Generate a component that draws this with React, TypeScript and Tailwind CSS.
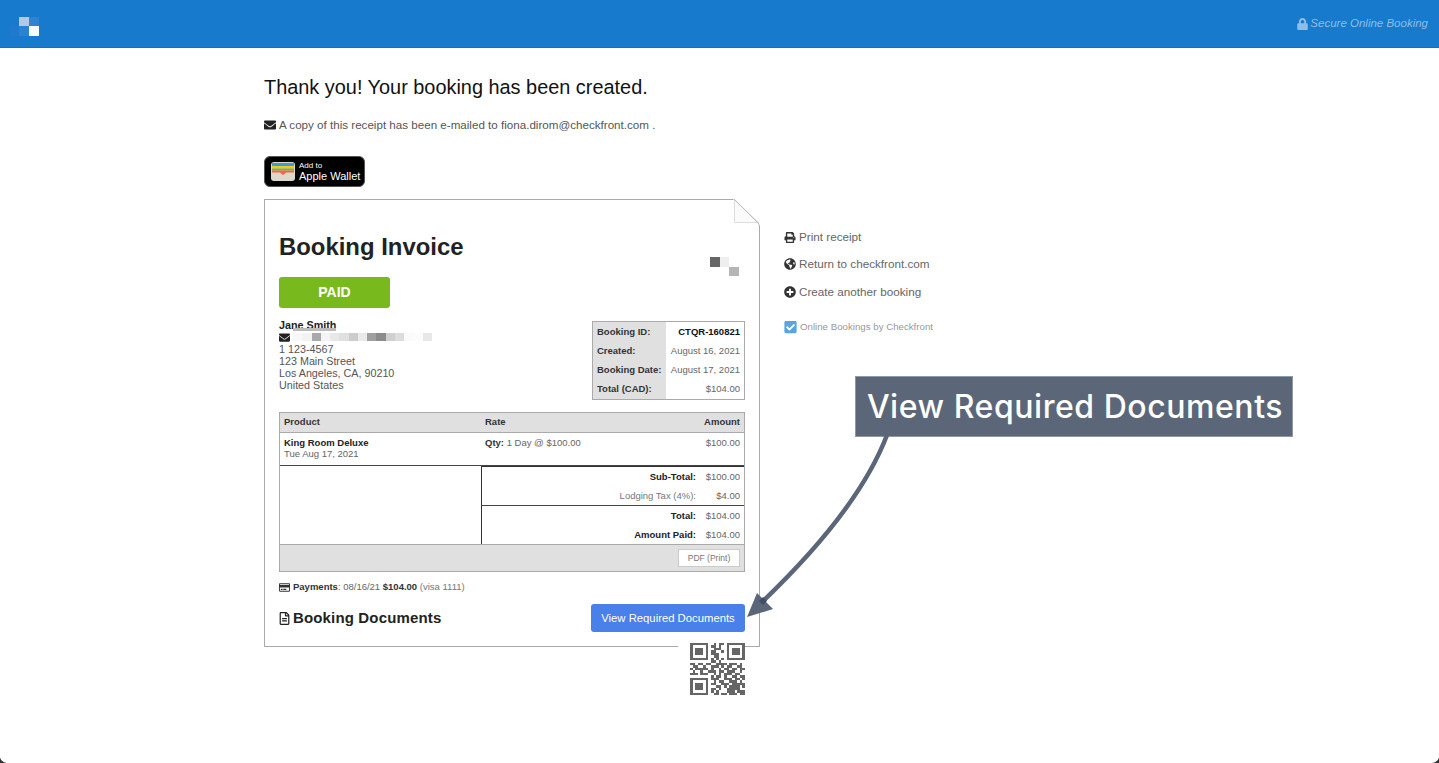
import React from "react";
import { FaEnvelope, FaPrint, FaGlobeAmericas, FaPlusCircle, FaLock, FaCheckSquare, FaRegCreditCard, FaRegFileAlt } from "react-icons/fa";

const blur = ["#f8f8f8", "#f3f3f3", "#a9a9a9", "#f4f4f4", "#e8e8e8", "#e0e0e0", "#cccccc", "#eaeaea", "#a0a0a0", "#8c8c8c", "#d0d0d0", "#dddddd", "#fafafa", "#fcfcfc", "#e8e8e8"];

const qr = [
  "111111100101101111111",
  "100000101101001000001",
  "101110100111001011101",
  "101110101100101011101",
  "101110101110001011101",
  "100000100110001000001",
  "111111101010101111111",
  "000000001101000000000",
  "110110110011110111010",
  "011001001110101100110",
  "101111101001011011011",
  "010010011101101110010",
  "111011100101011101100",
  "000000001011010011011",
  "111111101110011101101",
  "100000100101100111010",
  "101110101100111011111",
  "101110100011010111101",
  "101110101101001111100",
  "100000101010001110111",
  "111111100110110111011",
];

function Wallet() {
  return (
    <svg width="24" height="19" viewBox="0 0 24 19" aria-hidden="true">
      <rect width="24" height="19" rx="3" fill="#dcd8cc" />
      <rect x="1" y="1" width="22" height="3" fill="#2f9fe0" />
      <rect x="1" y="4" width="22" height="2.5" fill="#f8c520" />
      <rect x="1" y="6.5" width="22" height="2" fill="#5cc04a" />
      <path d="M1 8.5h22v2h-8l-3 2.5-3-2.5H1z" fill="#f8604f" />
    </svg>
  );
}

function Row({ label, value, gray }: { label: string; value: string; gray?: boolean }) {
  return (
    <div className="flex h-[18.5px] items-center justify-end pr-1">
      <span className={gray ? "text-[#777]" : "font-bold text-[#222]"}>{label}</span>
      <span className="w-[44px] text-right text-[#666]">{value}</span>
    </div>
  );
}

function InfoRow({ label, value, strong }: { label: string; value: string; strong?: boolean }) {
  return (
    <div className="flex h-[19.25px] items-center">
      <div className="flex h-full w-[73px] items-center bg-[#e0e0e0] pl-1 font-bold text-[#333]">{label}</div>
      <div className={`flex-1 pr-1 text-right ${strong ? "font-bold text-[#111]" : "text-[#666]"}`}>{value}</div>
    </div>
  );
}

export default function App() {
  return (
    <div className="relative h-[763px] overflow-hidden bg-white font-['Liberation_Sans',sans-serif] text-[#555]">
      <header className="flex h-12 items-center justify-between border-b border-[#1270c0] bg-[#177acc] pr-[11px]">
        <svg width="40" height="36" viewBox="0 0 40 36" aria-hidden="true" className="self-start">
          <rect x="10" y="26" width="9" height="10" fill="#2079cc" />
          <rect x="19" y="26" width="10" height="10" fill="#2a82d0" />
          <rect x="29" y="17" width="10" height="9" fill="#2e84d2" />
          <rect x="19" y="17" width="10" height="9" fill="#b1c9e8" />
          <rect x="29" y="26" width="10" height="10" fill="#f8fbff" />
        </svg>
        <div className="mt-[1px] flex items-center gap-[2px] text-[11.5px] italic text-[#8fbde8]">
          <FaLock className="h-[12px] w-[11px]" />
          <span>Secure Online Booking</span>
        </div>
      </header>

      <main className="ml-[264px] flex">
        <section className="w-[496px]">
          <h1 className="mt-[27px] text-[19.9px] leading-6 text-[#111]">Thank you! Your booking has been created.</h1>
          <p className="mt-[19px] flex h-[14px] items-center gap-[3px] text-[11.62px] text-[#555]">
            <FaEnvelope className="h-[12px] w-[12px] text-[#222]" />
            <span>A copy of this receipt has been e-mailed to fiona.dirom@checkfront.com .</span>
          </p>

          <div className="mt-[24px] flex h-[31px] w-[101px] items-center gap-[4px] rounded-[6px] border border-[#555] bg-black pl-[6px]">
            <Wallet />
            <div className="text-white">
              <div className="text-[8px] leading-[8px]">Add to</div>
              <div className="text-[11px] leading-[12px]">Apple Wallet</div>
            </div>
          </div>

          <div className="relative mt-[12px] h-[448px] border border-[#aaa] px-[14px]">
            <svg width="27" height="27" viewBox="0 0 27 27" aria-hidden="true" className="absolute right-[-1px] top-[-1px]">
              <path d="M0 0h27v27z" fill="#fff" />
              <path d="M1.5 1v22.5h24z" fill="#fbfbfb" stroke="#ddd" strokeWidth="1" />
              <path d="M1 0l25 25v2" fill="none" stroke="#bbb" strokeWidth="1" />
            </svg>

            <div className="flex items-start justify-between">
              <h2 className="mt-[32px] text-[23.9px] font-bold leading-[30px] text-[#222]">Booking Invoice</h2>
              <svg width="29" height="19" viewBox="0 0 29 19" aria-hidden="true" className="mr-[6px] mt-[57px]">
                <rect x="0" y="0" width="10" height="10" fill="#666" />
                <rect x="10" y="0" width="9" height="10" fill="#eee" />
                <rect x="19" y="10" width="10" height="9" fill="#b5b5b5" />
              </svg>
            </div>

            <div className="mt-[1px] flex h-[31px] w-[111px] items-center justify-center rounded-[3px] bg-[#78b91e] text-[14px] font-bold text-white">PAID</div>

            <div className="mt-[1px] flex items-start justify-between">
              <div className="relative pt-[10px] text-[10.75px] leading-[12px] text-[#555]">
                <div className="font-bold text-[#222]">Jane Smith</div>
                <div className="flex h-[12px] items-center">
                  <FaEnvelope className="mr-[3px] h-[11px] w-[11px] text-[#222]" />
                  <div className="flex">
                    {blur.map((c, i) => (
                      <span key={i} className="block h-[8px] w-[9.25px]" style={{ backgroundColor: c }} />
                    ))}
                  </div>
                </div>
                <div>1 123-4567</div>
                <div>123 Main Street</div>
                <div>Los Angeles, CA, 90210</div>
                <div>United States</div>
                <span className="absolute left-[14px] top-[19px] h-[3px] w-[43px] bg-[#bbb]" />
              </div>
              <div className="mt-[12px] h-[79px] w-[153px] border border-[#aaa] text-[9.5px]">
                <InfoRow label="Booking ID:" value="CTQR-160821" strong />
                <InfoRow label="Created:" value="August 16, 2021" />
                <InfoRow label="Booking Date:" value="August 17, 2021" />
                <InfoRow label="Total (CAD):" value="$104.00" />
              </div>
            </div>

            <div className="mt-[12px] h-[160px] border border-[#aaa] text-[9.5px]">
              <div className="flex h-[20px] items-center border-b border-[#aaa] bg-[#e0e0e0] px-1 font-bold text-[#333]">
                <span className="w-[201px]">Product</span>
                <span className="flex-1">Rate</span>
                <span>Amount</span>
              </div>
              <div className="flex h-[32px] px-1 pt-[4px]">
                <div className="w-[201px] leading-[11px]">
                  <div className="font-bold text-[#222]">King Room Deluxe</div>
                  <div className="text-[#666]">Tue Aug 17, 2021</div>
                </div>
                <div className="flex-1 leading-[11px] text-[#666]"><b className="text-[#333]">Qty:</b> 1 Day @ $100.00</div>
                <div className="leading-[11px] text-[#666]">$100.00</div>
              </div>
              <div className="flex h-[79px] border-t border-[#444]">
                <div className="w-[201px]" />
                <div className="flex-1 border-l border-t border-[#333]">
                  <div className="pt-[1px]">
                    <Row label="Sub-Total:" value="$100.00" />
                    <Row label="Lodging Tax (4%):" value="$4.00" gray />
                  </div>
                  <div className="border-t border-[#444] pt-[1px]">
                    <Row label="Total:" value="$104.00" />
                    <Row label="Amount Paid:" value="$104.00" />
                  </div>
                </div>
              </div>
              <div className="flex h-[27px] items-center justify-end border-t border-[#aaa] bg-[#e0e0e0] pr-1">
                <div className="flex h-[18px] w-[62px] items-center justify-center border border-[#ccc] bg-white text-[8.5px] text-[#777]">PDF (Print)</div>
              </div>
            </div>

            <div className="mt-[9px] flex h-[12px] items-center text-[9.5px] text-[#666]">
              <FaRegCreditCard className="mr-[3px] h-[11px] w-[11px] text-[#333]" />
              <b className="text-[#333]">Payments</b>: 08/16/21&nbsp;<b className="text-[#333]">$104.00</b>&nbsp;<span className="text-[#777]">(visa 1111)</span>
            </div>

            <div className="mt-[11px] flex items-center justify-between">
              <div className="flex items-center gap-[3px] text-[15px] font-bold text-[#222]">
                <FaRegFileAlt className="h-[13px] w-[11px]" />
                <span className="tracking-[0.15px]">Booking Documents</span>
              </div>
              <div className="flex h-[28px] w-[154px] items-center justify-center rounded-[3px] bg-[#4a80ea] text-[11.3px] text-white">View Required Documents</div>
            </div>
          </div>
        </section>

        <aside className="ml-[24px] pt-[182px] text-[11.7px] text-[#666]">
          <div className="flex h-[14px] items-center gap-[3px]"><FaPrint className="h-[11px] w-[12px] text-[#333]" />Print receipt</div>
          <div className="mt-[13px] flex h-[14px] items-center gap-[3px]"><FaGlobeAmericas className="h-[12px] w-[12px] text-[#333]" />Return to checkfront.com</div>
          <div className="mt-[14px] flex h-[14px] items-center gap-[3px]"><FaPlusCircle className="h-[12px] w-[12px] text-[#333]" />Create another booking</div>
          <div className="mt-[21px] flex h-[14px] items-center gap-[3px] text-[9.7px] text-[#999]"><FaCheckSquare className="h-[14px] w-[13px] text-[#5aa5e0]" />Online Bookings by Checkfront</div>
        </aside>
      </main>

      {/* QR code sitting over the invoice border */}
      <div className="absolute left-[678px] top-[643px] bg-white pb-[1px] pl-[12px]">
        <svg width="55" height="52" viewBox="0 0 21 21" preserveAspectRatio="none" shapeRendering="crispEdges" aria-hidden="true" className="block">
          {qr.map((line, y) =>
            line.split("").map((c, x) => (c === "1" ? <rect key={`${x}-${y}`} x={x} y={y} width="1" height="1" fill="#666" /> : null))
          )}
        </svg>
      </div>

      {/* Annotation callout and arrow */}
      <div className="absolute left-[855px] top-[376px] flex h-[61px] w-[438px] items-center justify-center border border-[#8f98a5] bg-[#5b6778] pl-[2px] font-['Inter',sans-serif] text-[32px] font-medium tracking-[0.55px] text-white">
        View Required Documents
      </div>
      <svg width="200" height="200" viewBox="0 0 200 200" aria-hidden="true" className="absolute left-[740px] top-[430px]">
        <path d="M147 5C128 55 85 112 21 173" fill="none" stroke="#5b6778" strokeWidth="4.5" />
        <path d="M7 187L17 163L33 179z" fill="#5b6778" />
        <path d="M19 171L23 175L27 171L23 167z" fill="#3f4f66" />
      </svg>

      {/* Rounded window corners of the capture */}
      <svg width="1439" height="8" viewBox="0 0 1439 8" aria-hidden="true" className="absolute bottom-0 left-0">
        <path d="M0 0v8h7A7 7 0 0 1 0 0z" fill="#333" />
        <path d="M1439 0v8h-7a7 7 0 0 0 7-8z" fill="#333" />
      </svg>
    </div>
  );
}
